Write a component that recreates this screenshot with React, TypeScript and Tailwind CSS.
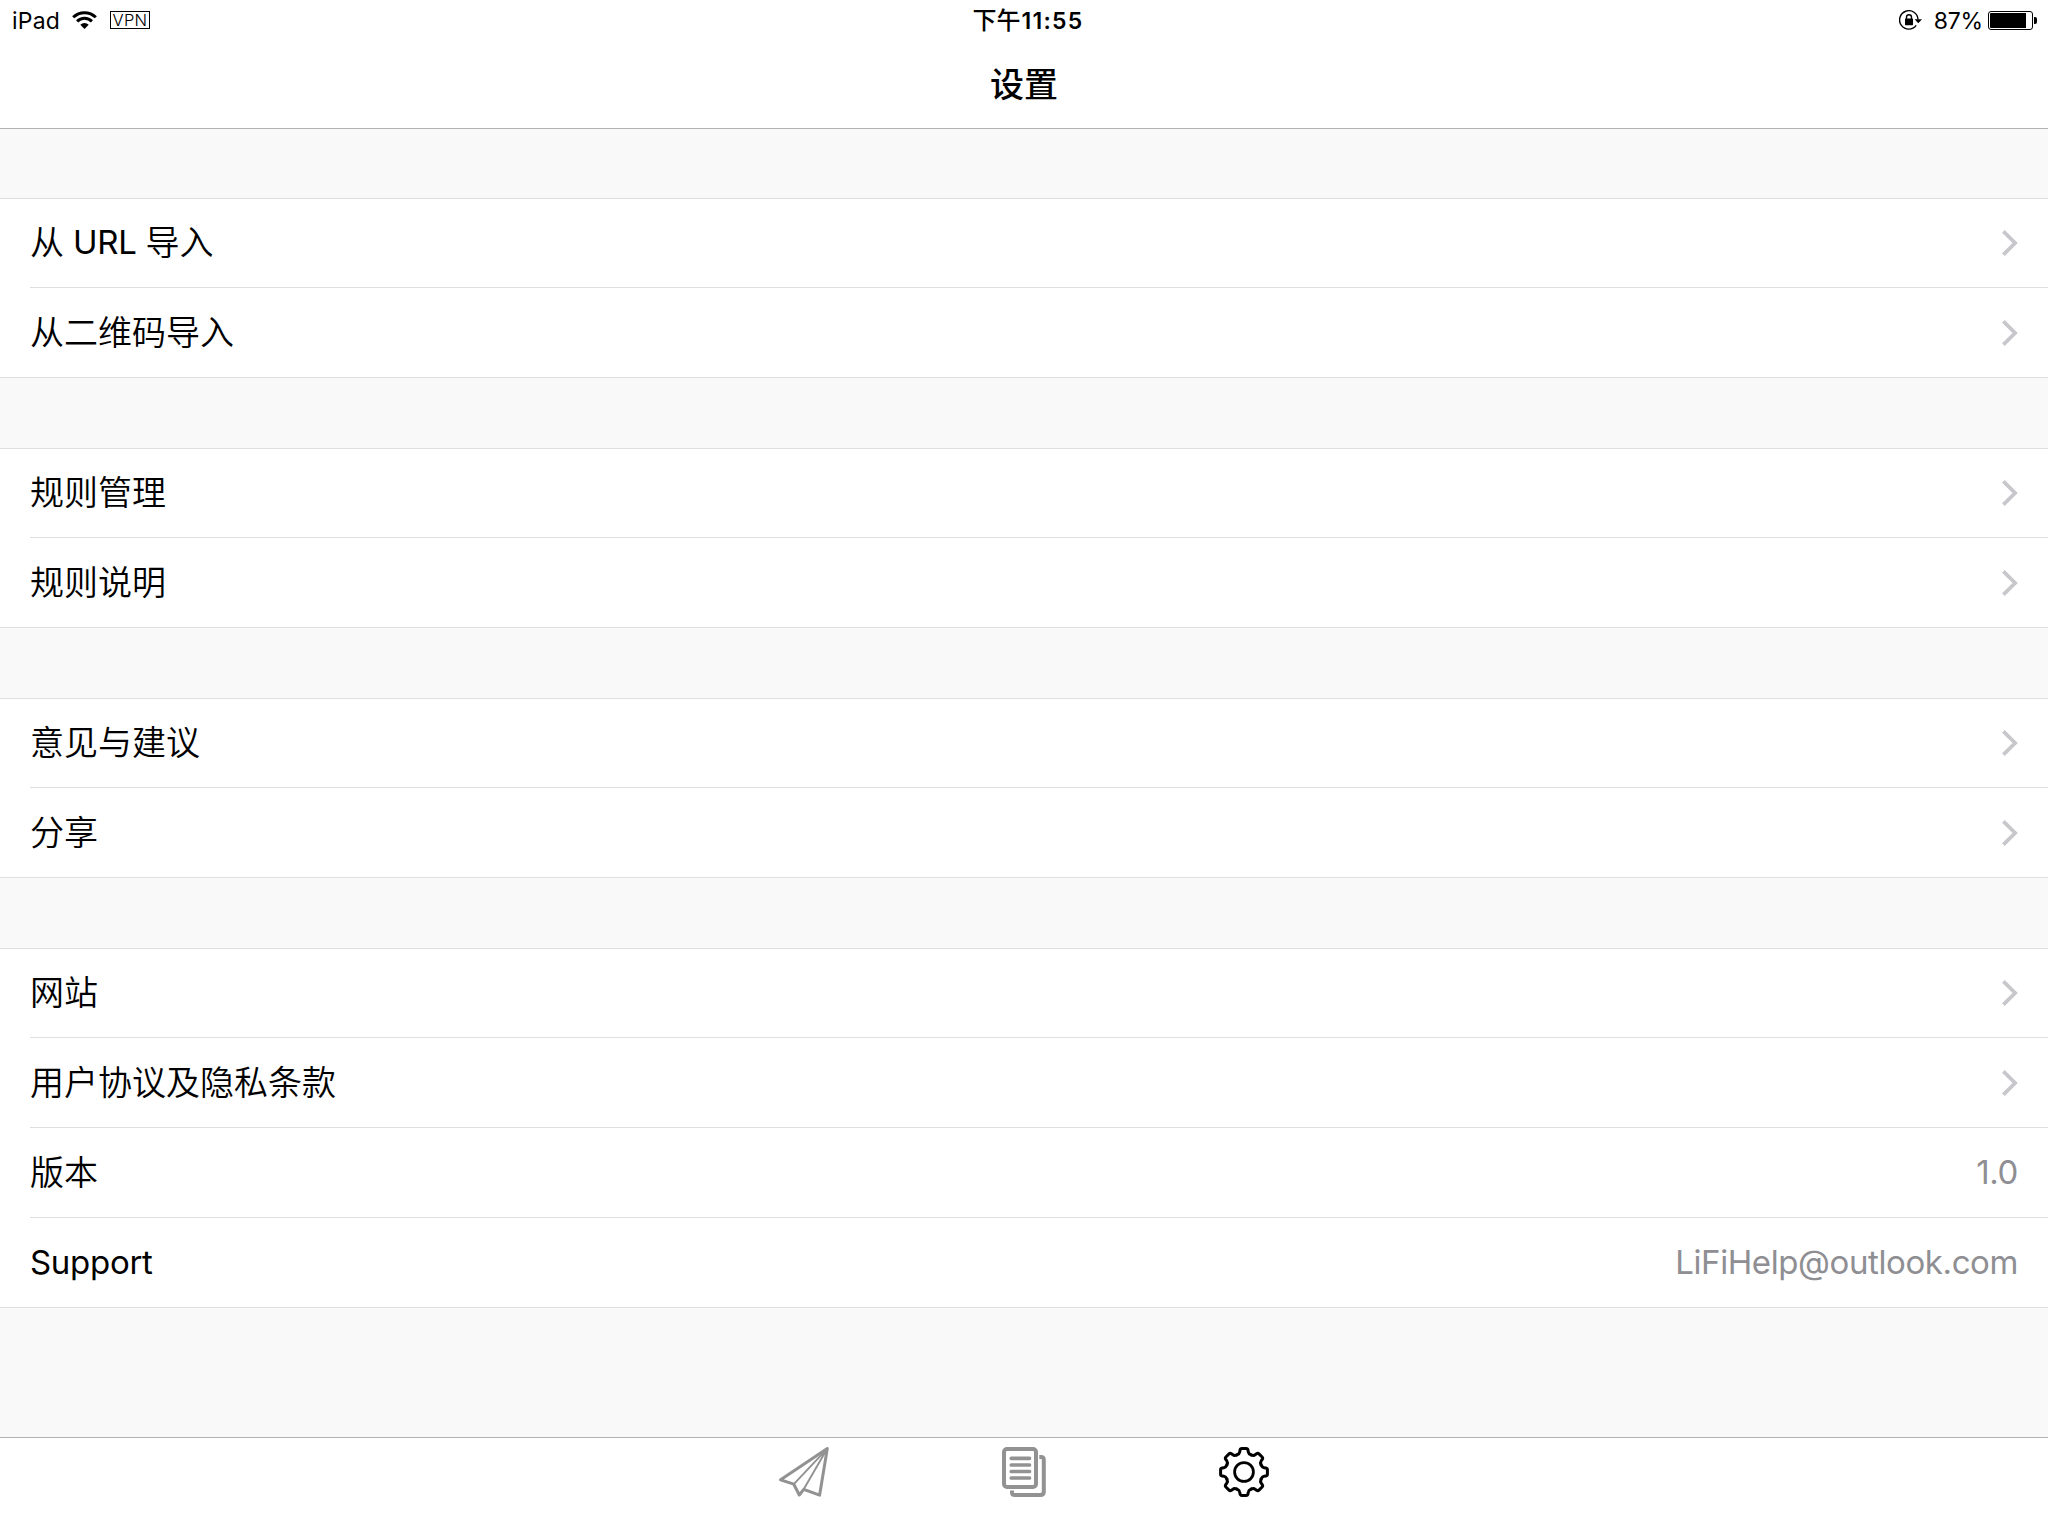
import React from "react";

type Item = { key: string; label: React.ReactNode; value?: string };

function Latin({ children }: { children: React.ReactNode }) {
  return <span className="relative -top-px text-[33px] font-normal tracking-[-0.3px]">{children}</span>;
}

const sections: Item[][] = [
  [
    {
      key: "url",
      label: (
        <>
          从<Latin> URL </Latin>导入
        </>
      ),
    },
    { key: "qr", label: "从二维码导入" },
  ],
  [
    { key: "rules", label: "规则管理" },
    { key: "rules-help", label: "规则说明" },
  ],
  [
    { key: "feedback", label: "意见与建议" },
    { key: "share", label: "分享" },
  ],
  [
    { key: "site", label: "网站" },
    { key: "terms", label: "用户协议及隐私条款" },
    { key: "version", label: "版本", value: "1.0" },
    { key: "support", label: <Latin>Support</Latin>, value: "LiFiHelp@outlook.com" },
  ],
];

const toothAngles = [0, 45, 90, 135, 180, 225, 270, 315];

function WifiIcon() {
  return (
    <svg width="25" height="18" viewBox="0 0 25 18" fill="none" stroke="#000" strokeWidth="3">
      <path d="M1.2 6.3 A16 16 0 0 1 23.8 6.3" />
      <path d="M5.1 10.4 A10.4 10.4 0 0 1 19.9 10.4" />
      <path d="M12.5 18 L8.3 13.8 A6 6 0 0 1 16.7 13.8 Z" fill="#000" stroke="none" />
    </svg>
  );
}

function RotationLockIcon() {
  return (
    <svg width="23" height="20" viewBox="0 0 23 20" fill="none">
      <path d="M19 9.5 A9.2 9.2 0 1 0 17.2 15.4" stroke="#000" strokeWidth="1.4" />
      <path d="M15.6 9.2 H23 L19.3 13.2 Z" fill="#000" />
      <rect x="6" y="8.6" width="8" height="6.6" rx="0.6" fill="#000" />
      <path d="M7.5 9.5 V7.3 A2.5 2.5 0 0 1 12.5 7.3 V9.5" stroke="#000" strokeWidth="1.4" />
    </svg>
  );
}

function Chevron() {
  return (
    <svg width="16" height="26" viewBox="0 0 16 26" fill="none" stroke="#c7c7cc" strokeWidth="3.8">
      <path d="M1.4 1.4 L13.1 13 L1.4 24.6" />
    </svg>
  );
}

function PlaneIcon() {
  return (
    <svg width="50" height="50" viewBox="0 0 50 50" fill="none" stroke="#929292" strokeLinejoin="round">
      <path d="M48.3 1.6 L1.6 32.8 L14.8 37.2 L20.3 48 L24.7 42.3 L40.6 48.2 Z" strokeWidth="3" />
      <path d="M48.3 1.6 L14.8 37.2 M48.3 1.6 L24.7 42.3" strokeWidth="1.9" />
    </svg>
  );
}

function DocumentsIcon() {
  return (
    <svg width="44" height="50" viewBox="0 0 44 50" fill="none" stroke="#929292">
      <rect x="2" y="2" width="32" height="38" rx="3" strokeWidth="4" />
      <path
        d="M9.3 11.3 H27.5 M9.3 18 H27.5 M9.3 24.5 H27.5 M9.3 31 H27.5"
        strokeWidth="3.7"
        strokeLinecap="round"
      />
      <path d="M37.3 10 H39 Q41.8 10 41.8 13 V44.5 Q41.8 48 38.3 48 H13 Q10 48 10 45.5 V43.5" strokeWidth="4" />
    </svg>
  );
}

function GearIcon() {
  return (
    <svg width="50" height="50" viewBox="-25 -25 50 50" fill="none" stroke="#000" strokeWidth="3" strokeLinecap="round">
      {toothAngles.map((a) => (
        <path
          key={a}
          transform={`rotate(${a})`}
          d="M-7.08 -17.1 C-5.3 -17.8 -4.5 -18.6 -4.3 -20 L-4 -21.8 Q-3.7 -23.4 -2.2 -23.4 H2.2 Q3.7 -23.4 4 -21.8 L4.3 -20 C4.5 -18.6 5.3 -17.8 7.08 -17.1"
        />
      ))}
      <circle r="9.4" strokeWidth="2.8" />
    </svg>
  );
}

function StatusBar() {
  return (
    <div className="grid h-10 grid-cols-3 items-center pr-[11px] pl-3 text-[23px] leading-none">
      <div className="flex items-center">
        <span className="w-[60px] pt-[2px] tracking-[0.2px]">iPad</span>
        <WifiIcon />
        <span className="ml-[13px] flex h-[18px] w-10 items-center justify-center border border-black text-[16.5px] font-light tracking-[0.3px]">
          VPN
        </span>
      </div>
      <div className="flex items-center justify-center pt-[2px] pl-[7px] font-medium">
        <span className="text-[24px]">下午</span>
        <span className="ml-px font-semibold tracking-[1.3px]">11:55</span>
      </div>
      <div className="flex items-center justify-end">
        <RotationLockIcon />
        <span className="ml-3 pt-[2px] tracking-[-0.2px]">87%</span>
        <span className="ml-[5px] flex h-[19px] w-[45px] rounded-[3px] border border-black p-px">
          <span className="h-full w-9 rounded-l-[1px] bg-black" />
        </span>
        <span className="ml-px h-[7px] w-[3px] rounded-r-[2px] bg-black" />
      </div>
    </div>
  );
}

function Row({ item, first }: { item: Item; first: boolean }) {
  return (
    <div className={first ? "h-[88px] pl-[30px]" : "h-[90px] pl-[30px]"}>
      <div
        className={
          first
            ? "flex h-full items-center justify-between pr-[30px]"
            : "flex h-full items-center justify-between border-t border-[#dfdfe1] pr-[30px]"
        }
      >
        <span className="font-[350]">{item.label}</span>
        {item.value ? (
          <span className="text-[33px] tracking-[-0.4px] text-[#8e8e93]">{item.value}</span>
        ) : (
          <Chevron />
        )}
      </div>
    </div>
  );
}

export default function App() {
  return (
    <div className="flex h-[1536px] w-[2048px] flex-col bg-[#f9f9f9] font-[Inter,'Noto_Sans_CJK_SC',sans-serif] text-black">
      <header className="h-[129px] border-b border-[#b2b2b2] bg-white">
        <StatusBar />
        <h1 className="flex h-[88px] items-center justify-center text-[34px] font-medium">设置</h1>
      </header>
      <main className="flex flex-1 flex-col gap-[70px] pt-[69px] text-[34px] leading-none">
        {sections.map((items, i) => (
          <section key={i} className="border-y border-[#dfdfe1] bg-white">
            {items.map((item, j) => (
              <Row key={item.key} item={item} first={j === 0} />
            ))}
          </section>
        ))}
      </main>
      <nav className="flex h-[99px] justify-center border-t border-[#b2b2b2] bg-white pt-[9px]">
        <span className="flex w-[220px] justify-center">
          <PlaneIcon />
        </span>
        <span className="flex w-[220px] justify-center">
          <DocumentsIcon />
        </span>
        <span className="flex w-[220px] justify-center">
          <GearIcon />
        </span>
      </nav>
    </div>
  );
}
